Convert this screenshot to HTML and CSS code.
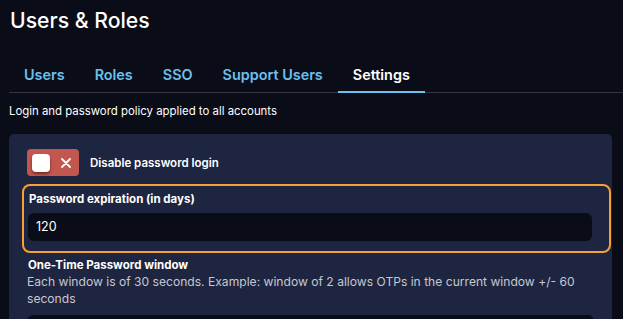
FILE: index.html
```html
<html>
<head>
<link rel="stylesheet" href="styles.css">
</head>
<body>
<div class="page">
  <h1 class="title">Users &amp; Roles</h1>
  <div class="tabs">
    <div class="tab">Users</div>
    <div class="tab">Roles</div>
    <div class="tab">SSO</div>
    <div class="tab">Support Users</div>
    <div class="tab active">Settings</div>
  </div>
  <p class="intro">Login and password policy applied to all accounts</p>

  <div class="card">
    <div class="toggleRow">
      <div class="toggle">
        <div class="knob"></div>
        <svg class="cross" width="10" height="10" viewBox="0 0 10 10"><path d="M1 1L9 9M9 1L1 9" stroke="#fff" stroke-width="1.8" stroke-linecap="round"/></svg>
      </div>
      <span class="toggleLabel">Disable password login</span>
    </div>

    <div class="field highlight">
      <label class="fieldLabel">Password expiration (in days)</label>
      <div class="input">120</div>
    </div>

    <div class="field">
      <label class="fieldLabel">One-Time Password window</label>
      <div class="hint">Each window is of 30 seconds. Example: window of 2 allows OTPs in the current window +/- 60 seconds</div>
      <div class="input">2</div>
    </div>
  </div>
</div>
</body>
</html>
```

FILE: styles.css
```css
body {
    margin: 0;
    background-color: #0a0d18;
    color: #ffffff;
    font-family: Inter, "Noto Sans", sans-serif;
}

.page {
    padding: 4px 11px 0 9px;
}

.title {
    margin: 0 0 0 1px;
    font-size: 21.2px;
    font-weight: 500;
    line-height: 32px;
}

.tabs {
    display: flex;
    margin-top: 23px;
    border-bottom: 1px solid #34373f;
    margin-right: -11px;
}

.tab {
    padding: 7px 15px 8px 15px;
    font-size: 14.4px;
    line-height: 17px;
    font-weight: 600;
    color: #6cc0ee;
    border-bottom: 2px solid transparent;
    margin-bottom: -1px;
}

.tab.active {
    color: #ffffff;
    border-bottom-color: #6cc0ee;
}

.intro {
    margin: 10px 0 0 0;
    font-size: 11.4px;
    line-height: 16px;
}

.card {
    margin-top: 15px;
    background-color: #1e2540;
    border-radius: 5px;
    padding: 15px 18px 20px 18px;
}

.toggleRow {
    display: flex;
    align-items: center;
    gap: 11px;
}

.toggle {
    width: 52px;
    height: 27px;
    box-sizing: border-box;
    background-color: #c2574f;
    border-radius: 4px;
    display: flex;
    align-items: center;
    padding-left: 5px;
}

.knob {
    width: 18px;
    height: 18px;
    background-color: #ffffff;
    border-radius: 4px;
    box-shadow: 0 2px 3px rgba(60, 0, 0, 0.55);
}

.cross {
    margin-left: 11px;
}

.toggleLabel {
    font-size: 11.5px;
    font-weight: 600;
}

.field {
    margin-top: 4px;
}

.highlight {
    margin: 8px -17px 0 -5px;
    padding: 4px 17px 10px 4px;
    border: 2px solid #f7a035;
    border-radius: 8px;
}

.fieldLabel {
    display: block;
    font-size: 11.5px;
    font-weight: 700;
    line-height: 18px;
    margin-left: 1px;
}

.field .fieldLabel {
    line-height: 16px;
}

.highlight .fieldLabel {
    line-height: 18px;
}

.input {
    margin-top: 5px;
    height: 28px;
    background-color: #0a0d18;
    border-radius: 6px;
    padding: 0 8px;
    font-size: 12.5px;
    line-height: 28px;
}

.hint {
    font-size: 12.1px;
    line-height: 17px;
    color: #c5c8d0;
    margin-right: 14px;
}

.field .hint + .input {
    margin-top: 8px;
}
```
